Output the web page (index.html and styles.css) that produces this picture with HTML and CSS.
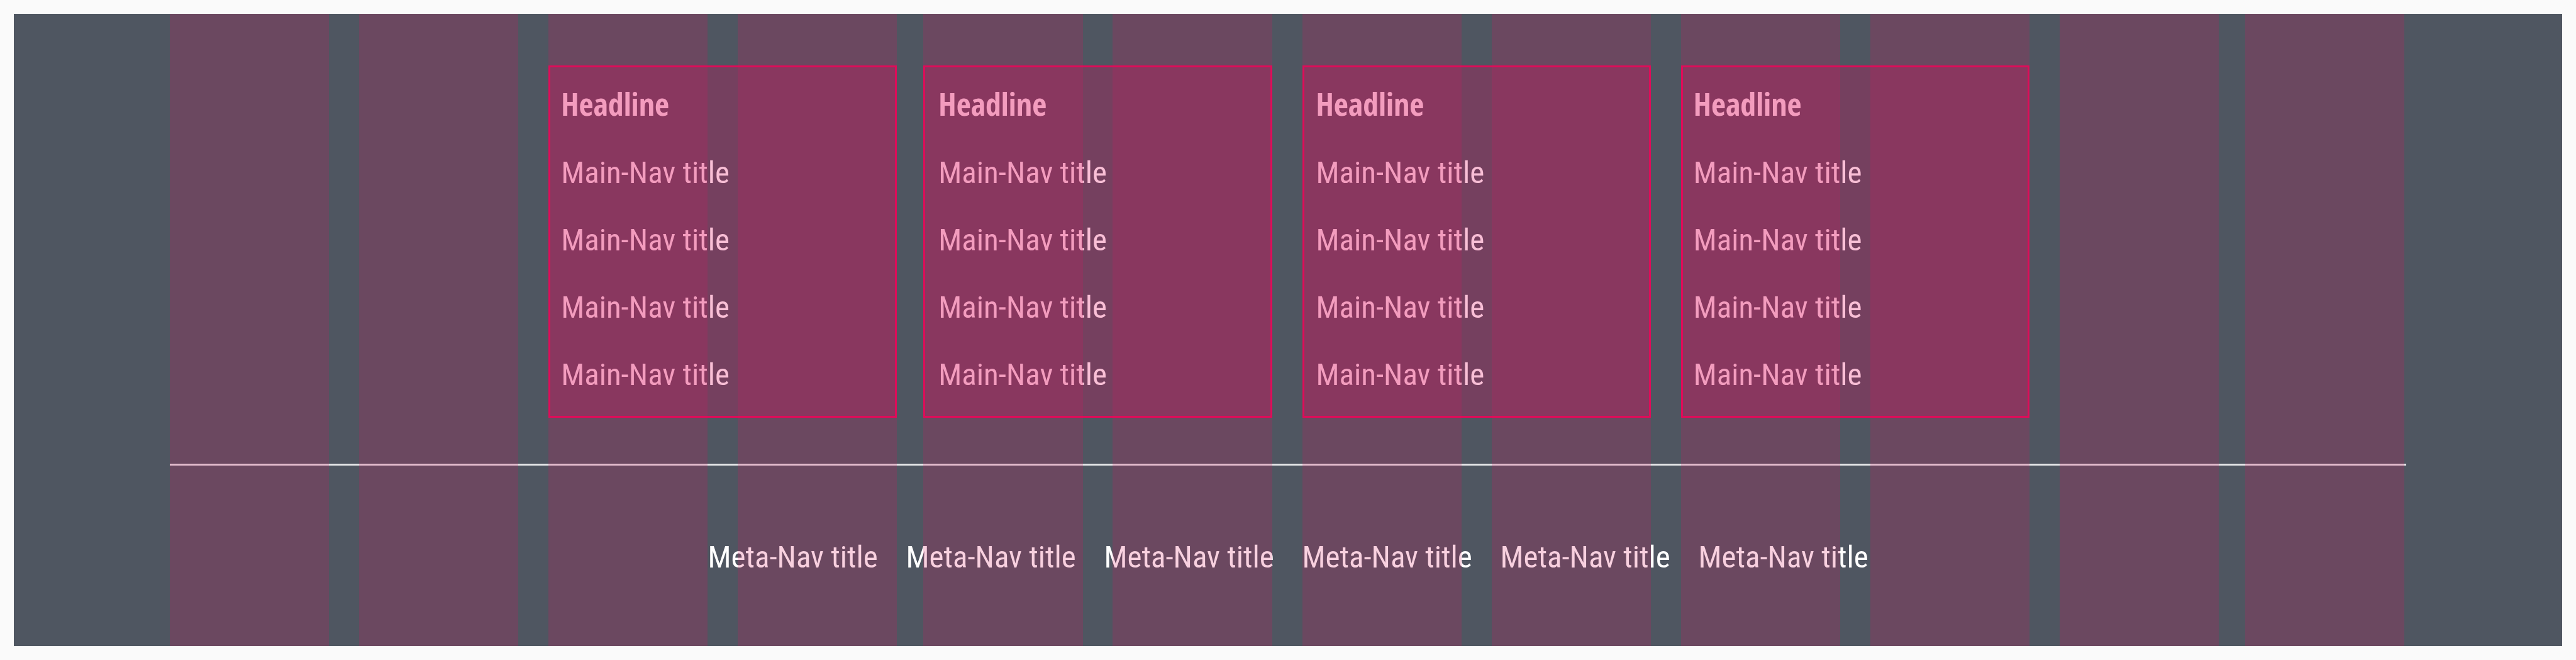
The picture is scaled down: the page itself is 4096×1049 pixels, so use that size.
FILE: index.html
```html
<!DOCTYPE html>
<html lang="en">
<head>
<meta charset="utf-8">
<title>Footer navigation grid</title>
<link rel="stylesheet" href="styles.css">
</head>
<body>
<footer class="footer">
  <nav class="main-nav" aria-label="Main">
    <section class="group">
      <h2 class="headline">Headline</h2>
      <ul class="links">
        <li><a href="#">Main-Nav title</a></li>
        <li><a href="#">Main-Nav title</a></li>
        <li><a href="#">Main-Nav title</a></li>
        <li><a href="#">Main-Nav title</a></li>
      </ul>
    </section>
    <section class="group">
      <h2 class="headline">Headline</h2>
      <ul class="links">
        <li><a href="#">Main-Nav title</a></li>
        <li><a href="#">Main-Nav title</a></li>
        <li><a href="#">Main-Nav title</a></li>
        <li><a href="#">Main-Nav title</a></li>
      </ul>
    </section>
    <section class="group">
      <h2 class="headline">Headline</h2>
      <ul class="links">
        <li><a href="#">Main-Nav title</a></li>
        <li><a href="#">Main-Nav title</a></li>
        <li><a href="#">Main-Nav title</a></li>
        <li><a href="#">Main-Nav title</a></li>
      </ul>
    </section>
    <section class="group">
      <h2 class="headline">Headline</h2>
      <ul class="links">
        <li><a href="#">Main-Nav title</a></li>
        <li><a href="#">Main-Nav title</a></li>
        <li><a href="#">Main-Nav title</a></li>
        <li><a href="#">Main-Nav title</a></li>
      </ul>
    </section>
  </nav>
  <hr class="divider">
  <nav class="meta-nav" aria-label="Meta">
    <a href="#">Meta-Nav title</a>
    <a href="#">Meta-Nav title</a>
    <a href="#">Meta-Nav title</a>
    <a href="#">Meta-Nav title</a>
    <a href="#">Meta-Nav title</a>
    <a href="#">Meta-Nav title</a>
  </nav>

  <!-- translucent layout guides, painted over the content -->
  <div class="area area-1"></div>
  <div class="area area-2"></div>
  <div class="area area-3"></div>
  <div class="area area-4"></div>
  <div class="col col-1"></div>
  <div class="col col-2"></div>
  <div class="col col-3"></div>
  <div class="col col-4"></div>
  <div class="col col-5"></div>
  <div class="col col-6"></div>
  <div class="col col-7"></div>
  <div class="col col-8"></div>
  <div class="col col-9"></div>
  <div class="col col-10"></div>
  <div class="col col-11"></div>
  <div class="col col-12"></div>
</footer>
</body>
</html>
```

FILE: styles.css
```css
* {
  box-sizing: border-box;
}

body {
  margin: 0;
  padding: 22px;
  background: #fafafa;
  color: #fff;
  font-family: "Roboto Condensed", Roboto, sans-serif;
  font-size: 49px;
  line-height: 107px;
}

a {
  color: inherit;
  text-decoration: none;
  white-space: nowrap;
}

.footer {
  display: grid;
  grid-template-columns:
    270fr 51fr 270fr 51fr 270fr 51fr 270fr 45fr
    270fr 51fr 270fr 51fr 270fr 51fr 270fr 51fr
    270fr 51fr 270fr 51fr 270fr 45fr 270fr 3fr;
  grid-template-rows: 82px auto 76px auto 88px;
  padding: 0 248px;
  background: #4f5661;
}

.main-nav {
  grid-area: 2 / 1 / 3 / -1;
  display: grid;
  grid-template-columns: repeat(12, 1fr);
  column-gap: 45px;
  padding: 8px 0 15px;
}

.group {
  grid-column: span 2;
  padding-left: 22px;
}

.group:first-child {
  grid-column: 3 / span 2;
}

.headline {
  margin: 0;
  font-family: "Open Sans Condensed", "Roboto Condensed", sans-serif;
  font-size: 50px;
  font-weight: 700;
}

.links {
  margin: 0;
  padding: 2px 0 0;
  list-style: none;
}

.divider {
  grid-area: 3 / 1 / 4 / -1;
  align-self: end;
  width: 100%;
  height: 3px;
  margin: 0;
  border: 0;
  background: #e3e4e6;
}

.meta-nav {
  grid-area: 4 / 1 / 5 / -1;
  display: grid;
  grid-template-columns: repeat(6, 270px);
  justify-content: center;
  column-gap: 45px;
  padding-top: 92px;
}

.area,
.col {
  pointer-events: none;
}

.area {
  grid-row: 2;
  border: 3px solid #e00a58;
  background: rgba(230, 0, 90, 0.25);
}

.area-1 { grid-column: 5 / 8; }
.area-2 { grid-column: 9 / 12; }
.area-3 { grid-column: 13 / 16; }
.area-4 { grid-column: 17 / 20; }

.col {
  grid-row: 1 / -1;
  background: rgba(220, 20, 95, 0.2);
}

.col-1 { grid-column: 1; }
.col-2 { grid-column: 3; }
.col-3 { grid-column: 5; }
.col-4 { grid-column: 7; }
.col-5 { grid-column: 9; }
.col-6 { grid-column: 11; }
.col-7 { grid-column: 13; }
.col-8 { grid-column: 15; }
.col-9 { grid-column: 17; }
.col-10 { grid-column: 19; }
.col-11 { grid-column: 21; }
.col-12 { grid-column: 23; }
```
